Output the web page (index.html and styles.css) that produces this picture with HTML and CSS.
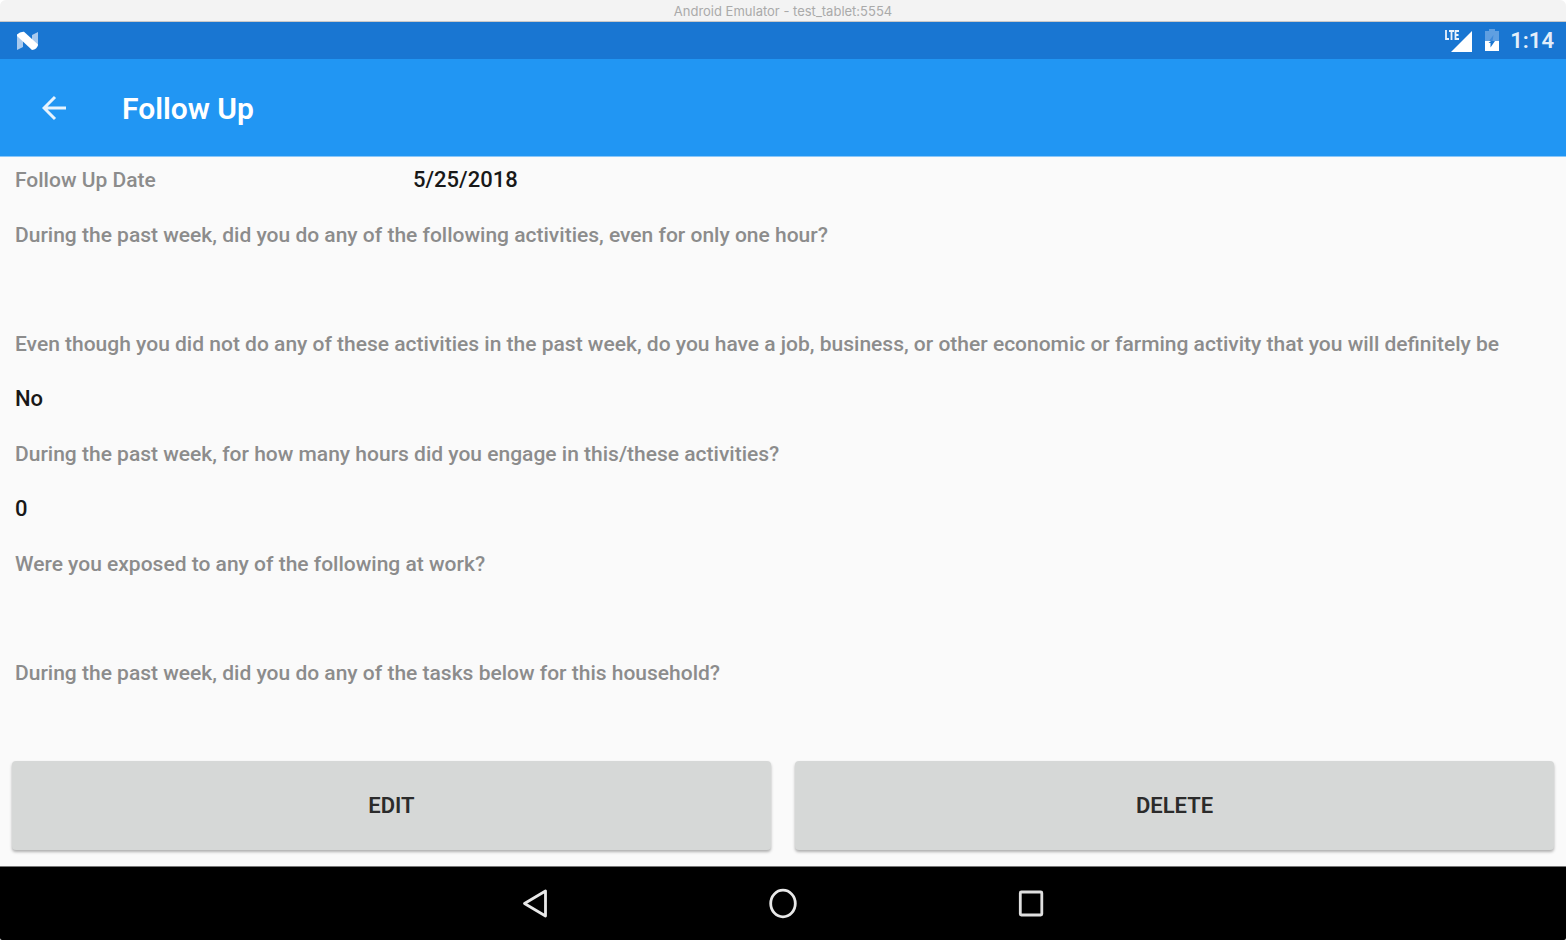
FILE: index.html
```html
<!DOCTYPE html>
<html lang="en">
<head>
<meta charset="utf-8">
<title>Follow Up</title>
<link rel="stylesheet" href="styles.css">
</head>
<body>
<div class="window">
  <div class="window-title">Android Emulator - test_tablet:5554</div>
  <div class="status-bar">
    <svg class="icon-n" width="24" height="20" viewBox="0 0 24 20" aria-hidden="true">
      <path d="M1 4 7 1V16L1 19ZM16 4 22 1V15L16 18Z" fill="#a9caee"/>
      <path d="M1 3.500Q4 .5 8 .8L22 13.500Q21 18.500 16 19L1 5Z" fill="#fff"/>
    </svg>
    <div class="status-icons">
      <svg width="29" height="24" viewBox="0 0 29 24" aria-hidden="true">
        <path d="M7 23 28 2V23Z" fill="#fff"/>
        <path d="M2 1V10H5M5 2H10M7.500 2V11M15 2H11.500V10H15M11.500 6H14.500" fill="none" stroke="#e8f1fb" stroke-width="1.800"/>
      </svg>
      <svg class="icon-battery" width="14" height="24" viewBox="0 0 14 24" aria-hidden="true">
        <path d="M4 0H10V2H14V12H0V2H4Z" fill="#5f9fe1"/>
        <path d="M0 12H14V22H0Z" fill="#fff"/>
        <path d="M8.500 6 4 12H7.500Z" fill="#3d89d9"/>
        <path d="M6 12H10L5.500 18.500V14H3.500Z" fill="#1976d2"/>
      </svg>
      <span class="clock">1:14</span>
    </div>
  </div>
  <header class="app-bar">
    <button class="back" type="button" aria-label="Back">
      <svg width="24" height="26" viewBox="0 0 24 26" aria-hidden="true">
        <path d="M13 2 2 13 13 24M2 13H24" fill="none" stroke="#e6f3fe" stroke-width="3"/>
      </svg>
    </button>
    <h1 class="title">Follow Up</h1>
  </header>
  <main class="content">
    <dl class="answers">
      <div class="pair">
        <dt class="row">Follow Up Date</dt>
        <dd class="row value">5/25/2018</dd>
      </div>
      <dt class="row">During the past week, did you do any of the following activities, even for only one hour?</dt>
      <dd class="row value empty"></dd>
      <dt class="row">Even though you did not do any of these activities in the past week, do you have a job, business, or other economic or farming activity that you will definitely be</dt>
      <dd class="row value">No</dd>
      <dt class="row">During the past week, for how many hours did you engage in this/these activities?</dt>
      <dd class="row value">0</dd>
      <dt class="row">Were you exposed to any of the following at work?</dt>
      <dd class="row value empty"></dd>
      <dt class="row">During the past week, did you do any of the tasks below for this household?</dt>
    </dl>
    <div class="actions">
      <button class="action" type="button">EDIT</button>
      <button class="action" type="button">DELETE</button>
    </div>
  </main>
  <nav class="nav-bar">
    <button class="nav-button" type="button" aria-label="Back">
      <svg width="28" height="32" viewBox="0 0 28 32" aria-hidden="true">
        <path d="M24.500 3V28L3.500 15.500Z" fill="none" stroke="#e8e8e8" stroke-width="2.800" stroke-linejoin="round"/>
      </svg>
    </button>
    <button class="nav-button" type="button" aria-label="Home">
      <svg width="28" height="32" viewBox="0 0 28 32" aria-hidden="true">
        <ellipse cx="14" cy="15.500" rx="12.300" ry="13.300" fill="none" stroke="#e8e8e8" stroke-width="2.800"/>
      </svg>
    </button>
    <button class="nav-button" type="button" aria-label="Recent apps">
      <svg width="28" height="32" viewBox="0 0 28 32" aria-hidden="true">
        <rect x="3.300" y="4" width="21.500" height="23" rx="1" fill="none" stroke="#e0e0e0" stroke-width="2.800"/>
      </svg>
    </button>
  </nav>
</div>
</body>
</html>
```
FILE: styles.css
```css
* {
  box-sizing: border-box;
}

body {
  margin: 0;
  background: #fff;
  font-family: Roboto, "Liberation Sans", sans-serif;
}

button {
  padding: 0;
  border: 0;
  background: none;
  font: inherit;
  color: inherit;
}

.window {
  display: flex;
  flex-direction: column;
  min-height: 100vh;
  overflow: hidden;
  border-radius: 6px 6px 2px 2px;
  background: #fafafa;
}

.window-title {
  height: 22px;
  border-bottom: 1px solid #c8c8c8;
  background: #f3f3f3;
  color: #aaa;
  font: 13px/23px Inter, sans-serif;
  text-align: center;
}

.status-bar {
  display: flex;
  align-items: center;
  justify-content: space-between;
  height: 37px;
  padding: 0 12px 0 16px;
  background: #1976d2;
  color: #e3eefa;
}

.status-icons {
  display: flex;
  align-items: center;
}

.icon-battery {
  margin: 0 11px 0 12px;
}

.clock {
  font-size: 22px;
  font-weight: 600;
  line-height: 36px;
}

.app-bar {
  display: flex;
  align-items: center;
  gap: 56px;
  height: 98px;
  padding: 0 42px;
  border-bottom: 1px solid #8ac7f9;
  background: #2196f3;
  color: #fff;
}

.back,
.nav-button {
  display: flex;
}

.title {
  margin: 0;
  padding-top: 2px;
  font-size: 30px;
  font-weight: 600;
  line-height: 36px;
}

.content {
  display: flex;
  flex: 1;
  flex-direction: column;
  justify-content: space-between;
}

.answers {
  display: flex;
  flex-direction: column;
  gap: 11px;
  margin: 0;
  padding: 1px 15px 0;
}

.pair {
  display: grid;
  grid-template-columns: 398px 1fr;
}

.row {
  min-height: 44px;
  margin: 0;
  overflow: hidden;
  color: #8c8c8c;
  font-size: 21px;
  font-weight: 500;
  line-height: 44px;
  white-space: nowrap;
}

.value {
  color: #181818;
  font-size: 22px;
}

.empty {
  min-height: 43px;
}

.actions {
  display: grid;
  grid-template-columns: 1fr 1fr;
  gap: 24px;
  padding: 0 12px 16px;
}

.action {
  height: 89px;
  border-radius: 4px;
  background: #d6d8d7;
  box-shadow: 0 2px 3px rgba(0, 0, 0, 0.3);
  color: #2b2b2b;
  font-size: 22px;
  font-weight: 600;
}

.nav-bar {
  display: flex;
  align-items: center;
  justify-content: center;
  gap: 220px;
  height: 74px;
  border-top: 1px solid #777;
  background: #000;
}
```
